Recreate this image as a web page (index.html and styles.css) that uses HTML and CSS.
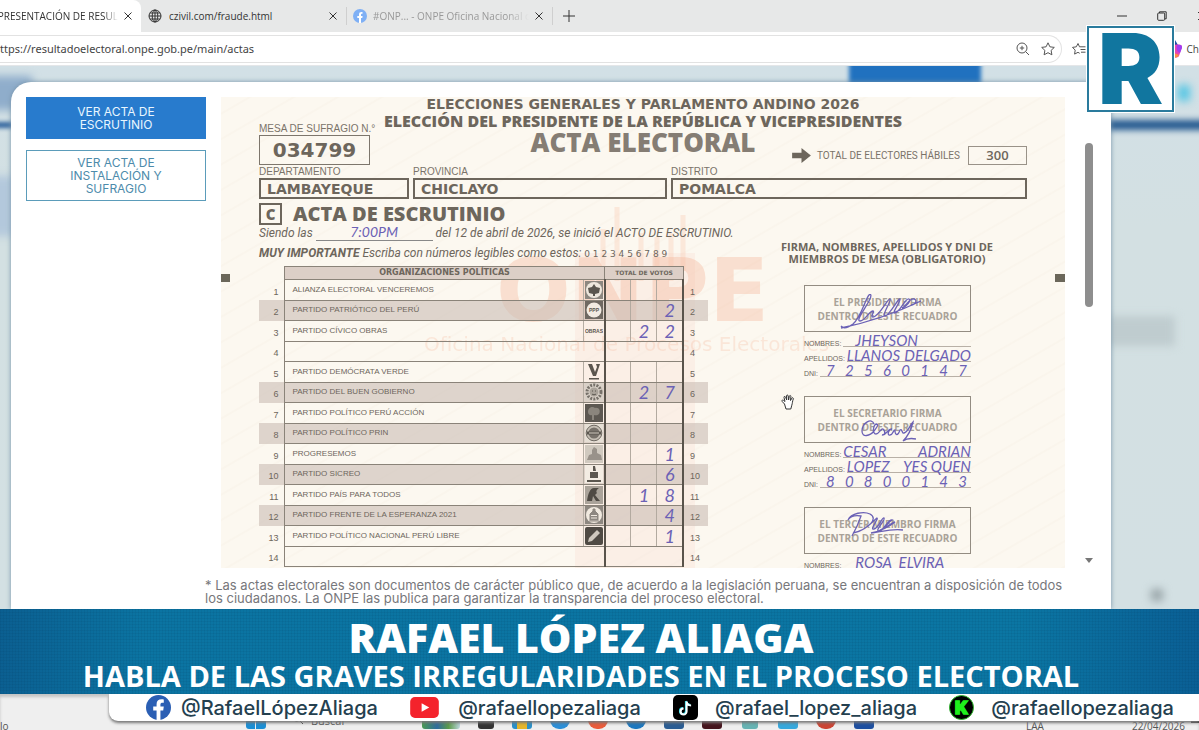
FILE: index.html
```html
<!DOCTYPE html>
<html lang="es">
<head>
<meta charset="utf-8">
<meta name="viewport" content="width=device-width, initial-scale=1">
<title>Presentación de resultados</title>
<link rel="stylesheet" href="styles.css">
</head>
<body>
<header class="browser">
  <div class="tabs">
    <div class="tab tab-active"><span class="tab-title">PRESENTACIÓN DE RESUL</span><button class="close" aria-label="Cerrar pestaña"><svg viewBox="0 0 8 8"><path d="M.5.5l7 7M7.500.5l-7 7"/></svg></button></div>
    <div class="tab tab-site"><svg class="globe" viewBox="0 0 14 14"><circle cx="7" cy="7" r="6"/><ellipse cx="7" cy="7" rx="2.800" ry="6"/><path d="M1 7h12M2 4h10M2 10h10M7 1v12"/></svg><span class="tab-title">czivil.com/fraude.html</span><button class="close" aria-label="Cerrar pestaña"><svg viewBox="0 0 8 8"><path d="M.5.5l7 7M7.500.5l-7 7"/></svg></button></div>
    <div class="tab tab-fb"><svg class="fb-small" viewBox="0 0 14 14"><circle cx="7" cy="7" r="7" fill="#7fb0f5"/><path d="M6 14V9H4.300V7H6V5.500C6 3.600 7 2.800 9.500 3v1.800C8.300 4.700 8 5 8 5.800V7h1.600l-.3 2H8v5z" fill="#fff"/></svg><span class="tab-title">#ONP... - ONPE Oficina Nacional d</span><button class="close" aria-label="Cerrar pestaña"><svg viewBox="0 0 8 8"><path d="M.5.5l7 7M7.500.5l-7 7"/></svg></button></div>
    <button class="new-tab" aria-label="Nueva pestaña"><svg viewBox="0 0 14 14"><path d="M7 1v12M1 7h12"/></svg></button>
    <div class="window-buttons">
      <button aria-label="Minimizar"><svg viewBox="0 0 10 10"><path d="M0 5h10"/></svg></button>
      <button aria-label="Restaurar"><svg viewBox="0 0 10 10"><rect x=".7" y="2" width="7" height="7.300" rx="1"/><path d="M2.500 2V.8h6.700v7H8"/></svg></button>
      <button aria-label="Cerrar"><svg viewBox="0 0 10 10"><path d="M1 1l8 8M9 1l-8 8"/></svg></button>
    </div>
  </div>
  <div class="toolbar">
    <div class="address">
      <input class="url" type="text" aria-label="Dirección" value="ttps://resultadoelectoral.onpe.gob.pe/main/actas">
      <svg class="tool" viewBox="0 0 14 14"><circle cx="6" cy="6" r="5"/><path d="M9.700 9.700L13 13M6 3.800v4.400M3.800 6h4.400"/></svg>
      <svg class="tool" viewBox="0 0 14 14"><path d="M7 .8l1.900 4 4.400.6-3.200 3 .8 4.400L7 10.700l-3.900 2.100.8-4.400-3.200-3 4.400-.6z"/></svg>
    </div>
    <svg class="tool" viewBox="0 0 14 14"><path d="M7.500 4.800H13.500M8.500 7.500h5M9 10.200h4.500M7.500 4.800L6 1.500 4.300 4.800l-3.800.6 2.700 2.700-.6 4L6 10.300l1.700 1"/></svg>
    <div class="copilot"><svg viewBox="0 0 12 18"><path d="M0 0h5l3 5-3 3H0z" fill="#1c4fa3"/><path d="M2 6c5-2 10-2 10 1l-3 9c-1 2-5 2-7 1z" fill="#e643b4"/><path d="M7 5c4-1 5 0 5 3l-2 5c-3-1-4-4-3-8z" fill="#a03df0"/><path d="M2 12l7 3c-1 3-5 3-7 2z" fill="#ff8a45"/></svg><span>Ch</span></div>
  </div>
</header>

<main class="stage">
  <div class="blur-shape nav-button"></div>
  <div class="blur-shape left-top"></div>
  <div class="blur-shape left-line"></div>
  <div class="blur-shape left-soft"></div>
  <div class="blur-shape right-line"></div>
  <div class="blur-shape right-cyan"></div>
  <div class="blur-shape right-box"></div>
  <div class="blur-shape right-dot"></div>

  <section class="dialog">
    <div class="dialog-body">
      <nav class="choices">
        <button class="choice choice-on">VER ACTA DE<br>ESCRUTINIO</button>
        <button class="choice">VER ACTA DE<br>INSTALACIÓN Y<br>SUFRAGIO</button>
      </nav>

      <article class="acta">
        <div class="watermark">
          <svg class="wm-hand" viewBox="0 0 120 400"><path d="M0 80h120v320H0z" opacity=".3"/><path d="M28 104V56M42 108V34M66 108V60M82 108V64M96 108V60M108 98V42" fill="none" stroke="#f9cfb9" stroke-width="5" opacity=".4"/></svg>
          <span class="wm-name">ONPE</span>
          <span class="wm-sub">Oficina Nacional de Procesos Electorales</span>
        </div>
        <i class="mark mark-left"></i><i class="mark mark-right"></i>

        <div class="acta-head">
          <div class="mesa"><span class="label">MESA DE SUFRAGIO N.°</span><strong class="mesa-num">034799</strong></div>
          <div class="titles">
            <p class="t1">ELECCIONES GENERALES Y PARLAMENTO ANDINO 2026</p>
            <p class="t2">ELECCIÓN DEL PRESIDENTE DE LA REPÚBLICA Y VICEPRESIDENTES</p>
            <p class="t3">ACTA ELECTORAL</p>
          </div>
          <div class="electors"><svg viewBox="0 0 20 16"><path d="M0 5h10V0l10 8-10 8v-5H0z"/></svg><span class="label">TOTAL DE ELECTORES HÁBILES</span><strong>300</strong></div>
        </div>

        <div class="places">
          <div><span class="label">DEPARTAMENTO</span><strong>LAMBAYEQUE</strong></div>
          <div><span class="label">PROVINCIA</span><strong>CHICLAYO</strong></div>
          <div><span class="label">DISTRITO</span><strong>POMALCA</strong></div>
        </div>

        <div class="acta-main">
          <div class="scrutiny">
            <h2><span class="letter">C</span>ACTA DE ESCRUTINIO</h2>
            <p class="start">Siendo las <span class="time ink">7:00PM</span> del 12 de abril de 2026, se inició el ACTO DE ESCRUTINIO.</p>
            <p class="note"><b>MUY IMPORTANTE</b> Escriba con números legibles como estos: <span class="samples">0 1 2 3 4 5 6 7 8 9</span></p>
            <table class="votes">
              <colgroup><col class="c-num"><col><col class="c-sym"><col class="c-v"><col class="c-v"><col class="c-v"><col class="c-num"></colgroup>
              <thead><tr><td class="out"></td><th class="head" colspan="2">ORGANIZACIONES POLÍTICAS</th><th class="head total" colspan="3">TOTAL DE VOTOS</th><td class="out"></td></tr></thead>
              <tbody>
                <tr><td class="n">1</td><td class="p">ALIANZA ELECTORAL VENCEREMOS</td><td class="s"><svg viewBox="0 0 18 18"><rect width="18" height="18" fill="#8d8780"/><circle cx="9" cy="9" r="8" fill="#eee7dd"/><path d="M9 3l2 3 4 1-1 5-4 1v2H8v-2l-4-1-1-5 4-1z" fill="#5b564f"/></svg></td><td class="v"></td><td class="v"></td><td class="v"></td><td class="n r">1</td></tr>
                <tr class="dim"><td class="n">2</td><td class="p">PARTIDO PATRIÓTICO DEL PERÚ</td><td class="s"><svg viewBox="0 0 18 18"><rect width="18" height="18" fill="#6f6962"/><circle cx="9" cy="9" r="7.500" fill="#f2ebe2"/><text x="9" y="11" text-anchor="middle" font-size="5" font-weight="700" fill="#5b564f">PPP</text></svg></td><td class="v"></td><td class="v"></td><td class="v ink">2</td><td class="n r">2</td></tr>
                <tr><td class="n">3</td><td class="p">PARTIDO CÍVICO OBRAS</td><td class="s"><svg viewBox="0 0 18 18"><text x="9" y="11" text-anchor="middle" font-size="5" font-weight="700" fill="#5b564f">OBRAS</text></svg></td><td class="v"></td><td class="v ink">2</td><td class="v ink">2</td><td class="n r">3</td></tr>
                <tr><td class="n">4</td><td class="p blank" colspan="2"></td><td class="v open" colspan="3"></td><td class="n r">4</td></tr>
                <tr><td class="n">5</td><td class="p">PARTIDO DEMÓCRATA VERDE</td><td class="s"><svg viewBox="0 0 18 18"><path d="M3 1h4l3 8 2-5-1-3h4l-4 12H8zM4 15h10v1.500H4z" fill="#5b564f"/></svg></td><td class="v"></td><td class="v"></td><td class="v"></td><td class="n r">5</td></tr>
                <tr class="dim"><td class="n">6</td><td class="p">PARTIDO DEL BUEN GOBIERNO</td><td class="s"><svg viewBox="0 0 18 18"><rect width="18" height="18" fill="#d8d0c7"/><circle cx="9" cy="9" r="7" fill="none" stroke="#77716a" stroke-width="3" stroke-dasharray="2 1.200"/><circle cx="9" cy="9" r="4.500" fill="#aaa39a"/><path d="M7 8h1M10 8h1M7 11c1 1 3 1 4 0" stroke="#5b564f" fill="none"/></svg></td><td class="v"></td><td class="v ink">2</td><td class="v ink">7</td><td class="n r">6</td></tr>
                <tr><td class="n">7</td><td class="p">PARTIDO POLÍTICO PERÚ ACCIÓN</td><td class="s"><svg viewBox="0 0 18 18"><rect width="18" height="18" fill="#5d5852"/><path d="M3 8c0-5 5-6 7-4 4-1 6 3 4 6-2 2-4 1-5 1v5H7v-5c-2 1-4-1-4-3z" fill="#8b857d"/></svg></td><td class="v"></td><td class="v"></td><td class="v"></td><td class="n r">7</td></tr>
                <tr class="dim"><td class="n">8</td><td class="p">PARTIDO POLÍTICO PRIN</td><td class="s"><svg viewBox="0 0 18 18"><rect width="18" height="18" fill="#e6dfd5"/><circle cx="9" cy="9" r="7.800" fill="#c6bfb5" stroke="#6f6962"/><circle cx="9" cy="9" r="5.500" fill="#77716a"/><path d="M2 7.500h14v3H2z" fill="#5b564f"/><path d="M4 9h10" stroke="#d8d0c7"/></svg></td><td class="v"></td><td class="v"></td><td class="v"></td><td class="n r">8</td></tr>
                <tr><td class="n">9</td><td class="p">PROGRESEMOS</td><td class="s"><svg viewBox="0 0 18 18"><rect width="18" height="18" fill="#d0c9bf"/><path d="M2 15l2-5 3-1V5l2-3 3 2v4l4 2 1 5z" fill="#99928a"/></svg></td><td class="v"></td><td class="v"></td><td class="v ink">1</td><td class="n r">9</td></tr>
                <tr class="dim"><td class="n">10</td><td class="p">PARTIDO SICREO</td><td class="s"><svg viewBox="0 0 18 18"><rect width="18" height="18" fill="#f3ece3"/><path d="M8 1h2l1 5H8zM5 7h8v6H5zM2 15h14v2H2z" fill="#5b564f"/></svg></td><td class="v"></td><td class="v"></td><td class="v ink">6</td><td class="n r">10</td></tr>
                <tr><td class="n">11</td><td class="p">PARTIDO PAÍS PARA TODOS</td><td class="s"><svg viewBox="0 0 18 18"><rect width="18" height="18" fill="#aaa39a"/><path d="M2 15C3 8 5 2 9 2h5c-3 2-3 4-2 5l-2 2 5 6h-4L8 10l-1 5z" fill="#4f4a44"/></svg></td><td class="v"></td><td class="v ink">1</td><td class="v ink">8</td><td class="n r">11</td></tr>
                <tr class="dim"><td class="n">12</td><td class="p">PARTIDO FRENTE DE LA ESPERANZA 2021</td><td class="s"><svg viewBox="0 0 18 18"><rect width="18" height="18" fill="#8d8780"/><circle cx="9" cy="9" r="8" fill="#f0e9df"/><path d="M8 3h2v2l3 3v6H5V8l3-3zM4 15h10" fill="#8d8780" stroke="#8d8780"/><path d="M6 9.500h6M6 12h6" stroke="#f0e9df"/></svg></td><td class="v"></td><td class="v"></td><td class="v ink">4</td><td class="n r">12</td></tr>
                <tr><td class="n">13</td><td class="p">PARTIDO POLÍTICO NACIONAL PERÚ LIBRE</td><td class="s"><svg viewBox="0 0 18 18"><rect width="18" height="18" rx="2" fill="#4f4a44"/><path d="M3 15l1-4 8-8 3 3-8 8z" fill="#cfc8be"/></svg></td><td class="v"></td><td class="v"></td><td class="v ink">1</td><td class="n r">13</td></tr>
                <tr><td class="n">14</td><td class="p blank" colspan="2"></td><td class="v open" colspan="3"></td><td class="n r">14</td></tr>
              </tbody>
            </table>
          </div>

          <div class="signers">
            <h3>FIRMA, NOMBRES, APELLIDOS Y DNI DE<br>MIEMBROS DE MESA (OBLIGATORIO)</h3>
            <div class="signer">
              <div class="sign-box">EL PRESIDENTE FIRMA<br>DENTRO DE ESTE RECUADRO<svg class="scribble" viewBox="0 0 84 36"><path d="M1 32c3 4 8 1 12-2 8-7 12-24 16-29 2-2 3 1 0 6-6 11-13 20-9 20 5 0 9-10 13-10 2 0-3 6 0 6 6 0 15-19 17-18 2 1-9 17-5 17s14-19 15-17-9 15-5 14c6-2 10-15 14-14 3 1-3 8-7 9 5-2 7-10 12-9 4 1 1 6-3 6l10-4C60 17 35 27 1 34"/></svg></div>
              <div class="line"><span class="small">NOMBRES:</span><span class="ink write one">JHEYSON</span></div>
              <div class="line"><span class="small">APELLIDOS:</span><span class="ink write"><span>LLANOS</span><span>DELGADO</span></span></div>
              <div class="line"><span class="small">DNI:</span><span class="ink write digits"><span>7</span><span>2</span><span>5</span><span>6</span><span>0</span><span>1</span><span>4</span><span>7</span></span></div>
            </div>
            <div class="signer">
              <div class="sign-box">EL SECRETARIO FIRMA<br>DENTRO DE ESTE RECUADRO<svg class="scribble low" viewBox="0 0 56 24"><path d="M14 5C12-2 2 4 2 12c0 7 8 5 12 0 2-3 5-6 3-7-4 0-5 10-1 10 3 0 5-6 7-5 2 2 3 6-1 6 4 1 6-7 10-6-4 0-5 7-2 6 3 0 3-5 5-5 0 6 3 6 5 0 2-2 2 4 4 3 4-1 6-8 9-11-2 9-6 15-10 19 4-3 8-3 13-2"/></svg></div>
              <div class="line"><span class="small">NOMBRES:</span><span class="ink write"><span>CESAR</span><span>ADRIAN</span></span></div>
              <div class="line"><span class="small">APELLIDOS:</span><span class="ink write"><span>LOPEZ</span><span>YES QUEN</span></span></div>
              <div class="line"><span class="small">DNI:</span><span class="ink write digits"><span>8</span><span>0</span><span>8</span><span>0</span><span>0</span><span>1</span><span>4</span><span>3</span></span></div>
            </div>
            <div class="signer">
              <div class="sign-box">EL TERCER MIEMBRO FIRMA<br>DENTRO DE ESTE RECUADRO<svg class="scribble third" viewBox="0 0 56 28"><path d="M5 25C9 18 13 8 14 5c-6-1-11 1-13 4C4 2 17 0 23 3c9 5-2 15-17 19 10-1 17-9 24-15 2 1-8 12-3 11s8-12 10-11c2 2-10 13-5 13s9-12 13-11c-5 3-6 8-12 10 7-2 10-7 15-8-5 4-14 9-24 11 9-1 22-5 32-3"/></svg></div>
              <div class="line"><span class="small">NOMBRES:</span><span class="ink write one"><span>ROSA &nbsp;ELVIRA</span></span></div>
            </div>
          </div>
        </div>
        <svg class="hand-cursor" viewBox="0 0 14 16"><path d="M3.500 10L1.200 7.500c-1-1 .5-2 1.500-1L4 7.500 3 3.500c-.3-1.200 1.200-1.500 1.600-.4L5.700 6 5.500 2c0-1.300 1.600-1.300 1.700 0l.4 4 .7-3.700c.3-1.200 1.700-1 1.600.3L9.500 6.500l1.300-2.300c.6-1 1.900-.3 1.500.7-1 2.600-.8 4.300-1.500 6.300L9.800 15H5z" fill="#fff" stroke="#333"/></svg>
      </article>

      <div class="scrollbar"><span class="thumb"></span><span class="arrow"></span></div>
    </div>
    <p class="footnote">* Las actas electorales son documentos de carácter público que, de acuerdo a la legislación peruana, se encuentran a disposición de todos<br>los ciudadanos. La ONPE las publica para garantizar la transparencia del proceso electoral.</p>
  </section>
</main>

<section class="banner">
  <h1>RAFAEL LÓPEZ ALIAGA</h1>
  <p>HABLA DE LAS GRAVES IRREGULARIDADES EN EL PROCESO ELECTORAL</p>
</section>

<footer class="bottom">
  <div class="taskbar">
    <span class="weather">lo</span>
    <div class="apps">
      <i class="app a-win"></i><span class="search"><svg viewBox="0 0 12 12"><circle cx="5" cy="5" r="4"/><path d="M8 8l4 4"/></svg>Buscar</span><i class="app a-pic"></i><i class="app a-dark"></i><i class="app a-files"></i><i class="app a-blue"></i><i class="app a-red"></i><i class="app a-edge"></i><i class="app a-store"></i><i class="app a-maroon"></i><i class="app a-teal"></i><i class="app a-sky"></i><i class="app a-chrome"></i><i class="app a-word"></i>
    </div>
    <div class="tray"><span>LAA</span><span>22/04/2026</span><i class="bell"></i></div>
  </div>
  <div class="social">
    <a class="s-fb" href="#"><svg viewBox="0 0 26 26"><circle cx="13" cy="13" r="13" fill="#2b5fb4"/><path d="M11 26V16H7.500v-4H11V9.500C11 5.500 13.500 4 18.500 4.700V8c-2.500-.2-3.500.2-3.500 2v2h3.500l-.6 4H15v10z" fill="#fff"/></svg>@RafaelLópezAliaga</a>
    <a class="s-yt" href="#"><svg viewBox="0 0 30 22"><rect width="30" height="22" rx="5" fill="#f4232c"/><path d="M12 6.500l8 4.500-8 4.500z" fill="#fff"/></svg>@rafaellopezaliaga</a>
    <a class="s-tt" href="#"><svg viewBox="0 0 25 25"><rect width="25" height="25" rx="5" fill="#000"/><path d="M13 6v10a3 3 0 1 1-3-3M13 6c.3 2.500 2 4 4.500 4" fill="none" stroke="#25d9e5" stroke-width="2.200"/><path d="M13.600 6.500v10a3 3 0 1 1-3-3M13.600 6.500c.3 2.500 2 4 4.500 4" fill="none" stroke="#fff" stroke-width="2"/></svg>@rafael_lopez_aliaga</a>
    <a class="s-kk" href="#"><svg viewBox="0 0 26 26"><circle cx="13" cy="13" r="12.500" fill="#000" stroke="#2fbd2c"/><text x="13" y="19.500" text-anchor="middle" font-size="18" font-weight="900" fill="#1ff01c" stroke="#1ff01c" stroke-width="1.500">K</text></svg>@rafaellopezaliaga</a>
  </div>
</footer>

<div class="logo">R</div>
</body>
</html>
```

FILE: styles.css
```css
* { box-sizing: border-box; }
html, body { height: 100%; }
body {
  margin: 0;
  display: flex;
  flex-direction: column;
  overflow: hidden;
  position: relative;
  font-family: "Open Sans", "Noto Sans", sans-serif;
  background: #fff;
}
p, h1, h2, h3 { margin: 0; }
button { border: 0; background: none; padding: 0; font: inherit; color: inherit; }
svg { display: block; flex: none; }

/* Browser chrome */
.tabs { display: flex; align-items: center; height: 32px; background: #e7e8e8; font-size: 10px; color: #333; white-space: nowrap; }
.tab { display: flex; align-items: center; height: 18px; padding-right: 9px; }
.tab-title { flex: 1; overflow: hidden; }
.tab-active { width: 141px; height: 32px; background: #fff; border-radius: 0 8px 0 0; }
.tab-active .tab-title { direction: rtl; margin-right: 6px; -webkit-mask-image: linear-gradient(90deg, #000 88%, transparent); mask-image: linear-gradient(90deg, #000 88%, transparent); }
.tab-site { width: 206px; padding-left: 7px; border-right: 1px solid #cfcfcf; gap: 7px; }
.tab-fb { width: 206px; padding-left: 6px; border-right: 1px solid #cfcfcf; gap: 6px; color: #999; }
.tab-fb .tab-title { -webkit-mask-image: linear-gradient(90deg, #000 85%, transparent); mask-image: linear-gradient(90deg, #000 85%, transparent); }
.tab svg { fill: none; stroke: #333; stroke-width: 1; }
.close svg { width: 8px; height: 8px; }
.globe, .tab .fb-small { width: 14px; height: 14px; }
.tab .fb-small { stroke: none; }
.new-tab { margin-left: 9px; }
.new-tab svg { width: 14px; height: 14px; stroke: #333; }
.window-buttons { margin-left: auto; display: flex; gap: 30px; margin-right: -8px; }
.window-buttons svg { width: 10px; height: 10px; fill: none; stroke: #333; }
.toolbar { display: flex; align-items: center; height: 34px; background: #fff; border-bottom: 1px solid #e4e6e8; }
.address { display: flex; align-items: center; gap: 11px; flex: 1; height: 28px; padding-right: 6px; border: 1px solid #e2e2e2; border-left: 0; border-radius: 0 14px 14px 0; }
.url { flex: 1; border: 0; padding: 0; font: 11px "Noto Sans", "Open Sans", sans-serif; color: #444; background: none; }
.tool { width: 14px; height: 14px; fill: none; stroke: #555; }
.toolbar > .tool { margin: 0 84px 0 10px; }
.copilot { display: flex; align-items: center; gap: 5px; font-size: 10px; color: #444; }
.copilot svg { width: 12px; height: 18px; }

/* Blurred page behind the dialog */
.stage { position: relative; flex: 1; min-height: 0; display: flex; overflow: hidden; padding: 16px 88px 0 11px; background: linear-gradient(#d2e0e6, #d3e0e2 30%, #d3e0e3); }
.blur-shape { position: absolute; filter: blur(4px); }
.nav-button { left: 849px; top: -6px; width: 132px; height: 40px; background: #2071bf; filter: blur(2px); }
.left-top { left: -10px; top: 10px; width: 42px; height: 34px; background: #8fadcb; }
.left-line { left: -10px; top: 56px; width: 32px; height: 6px; background: #2f639d; filter: blur(2px); }
.left-soft { left: -10px; top: 110px; width: 26px; height: 60px; background: #b3c8dc; }
.right-line { right: -10px; top: 54px; width: 110px; height: 10px; background: #24588f; filter: blur(3px); }
.right-cyan { right: 9px; top: 19px; width: 12px; height: 16px; background: #55c6e4; }
.right-box { right: 24px; top: 250px; width: 70px; height: 30px; background: #bfcccf; }
.right-dot { right: 36px; top: 523px; width: 12px; height: 12px; background: #98a4a8; }

.dialog { position: relative; flex: 1; display: flex; flex-direction: column; padding: 15px 18px 0 15px; background: #fff; border-radius: 20px 0 0 0; box-shadow: 0 0 5px #7793a8; }
.dialog-body { flex: 1; min-height: 0; display: grid; grid-template-columns: 180px 1fr 8px; grid-template-rows: 100%; column-gap: 15px; }
.choices { display: flex; flex-direction: column; gap: 11px; }
.choice { display: block; padding: 5px 0; border: 1px solid #5b9cba; color: #4d8bab; font-family: "Inter", sans-serif; font-size: 12px; line-height: 13px; }
.choice-on { background: #287bcd; border-color: #287bcd; color: #e8f6ff; padding: 7px 0; }
.footnote { margin-left: 179px; padding: 11px 0 4px; white-space: nowrap; font-family: "Inter", sans-serif; font-size: 13px; line-height: 13px; color: #77777b; }
.scrollbar { display: flex; flex-direction: column; justify-content: space-between; align-items: center; padding: 46px 0 5px; width: 8px; }
.thumb { width: 8px; height: 164px; border-radius: 4px; background: #8e8e8e; }
.arrow { border: 4px solid transparent; border-top: 5px solid #777; border-bottom: 0; }

/* Scanned record */
.acta { position: relative; overflow: hidden; margin-right: 5px; padding: 0 38px; color: #6d665c; background: repeating-linear-gradient(150deg, #fcf8f0 0 13px, #faf5ec 14px 15px, #fcf8f0 16px 22px); font-family: "Liberation Sans", sans-serif; }
.label { font-size: 10px; line-height: 13px; color: #7a7369; white-space: nowrap; }
.acta-head, .places, .acta-main { position: relative; }
.acta-head { display: grid; height: 68px; }
.acta-head > div { grid-area: 1 / 1; }
.mesa { justify-self: start; align-self: end; display: flex; flex-direction: column; }
.mesa-num { width: 111px; height: 30px; border: 1px solid #7d766c; text-align: center; font: 700 20px/28px "DejaVu Sans", sans-serif; }
.titles { text-align: center; white-space: nowrap; }
.t1 { font: 700 14px/15px "DejaVu Sans", sans-serif; }
.t2 { font: 800 16px/18px "Open Sans", sans-serif; }
.t3 { font: 800 26px/24px "Open Sans", sans-serif; color: #857d74; }
.electors { justify-self: end; align-self: end; display: flex; align-items: center; }
.electors .label { font-family: "Roboto", sans-serif; font-size: 10px; }
.electors svg { width: 19px; height: 15px; fill: #6d665c; margin-right: 6px; }
.electors strong { width: 59px; height: 19px; margin-left: 8px; border: 1px solid #999288; text-align: center; font: 600 13px/17px "Open Sans", sans-serif; }
.places { display: grid; grid-template-columns: 150fr 254fr 356fr; gap: 4px; }
.places > div { display: flex; flex-direction: column; }
.places strong { height: 21px; padding-left: 6px; border: 2px solid #6d665c; font: 700 14px/18px "DejaVu Sans", sans-serif; }
.acta-main { display: grid; grid-template-columns: 1fr 280px; padding-top: 4px; }
.scrutiny { min-width: 0; white-space: nowrap; }
.scrutiny h2 { display: flex; align-items: center; gap: 11px; font: 800 20px/22px "Open Sans", sans-serif; }
.letter { width: 23px; height: 22px; border: 2px solid #6d665c; text-align: center; font-size: 15px; line-height: 18px; }
.start, .note { font: italic 12px/20px "Roboto", "Liberation Sans", sans-serif; }
.start { line-height: 16px; }
.time { display: inline-block; width: 117px; height: 12px; border-bottom: 1px solid #888; text-align: center; font-size: 14px; line-height: 5px; }
.note { padding-top: 2px; }
.samples { font: 9px "DejaVu Sans", sans-serif; }
.ink { color: #6b61b5; font-family: "Lato", sans-serif; font-style: italic; }

.votes { margin-top: 3px; width: 449px; height: 301px; table-layout: fixed; border-collapse: collapse; }
.votes td, .votes th { padding: 0; line-height: 10px; }
.votes tbody tr { height: 20px; }
.c-num { width: 25px; }
.c-sym { width: 21px; }
.c-v { width: 26px; }
.votes .head { height: 13px; border: 1px solid #8a8379; background: #dccfc7; font: 700 8px/10px "DejaVu Sans", sans-serif; }
.votes .head.total { font-size: 6px; }
.votes .n { font-size: 9px; text-align: right; padding: 4px 5px 0 0; }
.votes .n.r { text-align: left; padding-left: 6px; }
.votes .p { padding: 0 0 0 8px; border: 1px solid #8a8379; border-right-color: #b5ada3; font-size: 8px; }
.votes .s { border-top: 1px solid #8a8379; border-bottom: 1px solid #8a8379; }
.votes .s svg { width: 18px; height: 18px; margin: auto; font-family: "Liberation Sans", sans-serif; }
.votes .v { border: 1px solid #b3aaa0; border-top-color: #8a8379; border-bottom-color: #8a8379; text-align: center; font-size: 18px; }
.votes .s + .v, .votes .open { border-left: 2px solid #59534b; }
.votes tbody td:nth-last-child(2) { border-right: 2px solid #59534b; }
.dim { background: #cbbdb59c; }

.signers h3 { padding: 38px 0 20px; text-align: center; white-space: nowrap; font: 700 11px/12px "Open Sans", sans-serif; }
.signer { width: 167px; margin: 0 auto 19px 57px; }
.sign-box { position: relative; height: 47px; padding-top: 9px; border: 1px solid #938c82; text-align: center; white-space: nowrap; color: #a9a298; font: 700 10px/14px "Open Sans", sans-serif; }
.scribble { position: absolute; left: 35px; top: 8px; width: 84px; height: 36px; fill: none; stroke: #6b61b5; stroke-width: 1.300; }
.scribble.low { left: 55px; top: 22px; width: 56px; height: 24px; }
.scribble.third { left: 42px; top: 3px; width: 56px; height: 28px; }
.line { display: flex; align-items: flex-end; gap: 2px; height: 15px; }
.small { font-size: 7px; line-height: 7px; }
.write { flex: 1; display: flex; justify-content: space-between; height: 13px; border-bottom: 1px solid #b8b0a6; font-size: 15px; line-height: 12px; white-space: nowrap; }
.write.one { padding-left: 12px; }
.digits { padding: 0 4px 0 6px; }

.watermark { position: absolute; inset: 0; color: #f5b598; white-space: nowrap; }
.wm-hand { position: absolute; left: 354px; top: 76px; width: 120px; height: 400px; fill: #f9dccf; }
.wm-name { position: absolute; left: 275px; top: 142px; font: 700 88px/104px "DejaVu Sans", sans-serif; opacity: .36; }
.wm-sub { position: absolute; left: 203px; top: 236px; font: 20px/22px "DejaVu Sans", sans-serif; opacity: .26; }
.mark { position: absolute; top: 177px; width: 10px; height: 8px; background: #6b675a; }
.mark-left { left: -1px; }
.mark-right { right: 0; }
.hand-cursor { position: absolute; left: 560px; top: 297px; width: 14px; height: 16px; }

/* Broadcast lower third */
.banner { position: relative; height: 85px; padding: 7px 37px 0 0; text-align: center; white-space: nowrap; color: #fff; background: repeating-linear-gradient(90deg, #00305014 0 1px, transparent 1px 3px), repeating-linear-gradient(#00305014 0 1px, transparent 1px 3px), linear-gradient(90deg, #0b5f91, #0b74a2 12%, #0b76a3 85%, #0a5f95); }
.banner h1 { font: 800 41px/42px "Open Sans", sans-serif; }
.banner p { font: 700 29px/36px "Open Sans", sans-serif; }
.bottom { position: relative; height: 36px; }
.taskbar { display: flex; height: 36px; background: #efefef; box-shadow: inset 0 3px 3px #c4c4c4; font-size: 10px; color: #555; }
.weather { width: 246px; padding-top: 25px; }
.apps { display: flex; gap: 18px; padding-top: 17px; }
.app { width: 20px; height: 18px; border-radius: 3px; }
.search { display: flex; gap: 8px; width: 120px; padding: 2px 0 0 8px; font-size: 11px; }
.search svg { width: 11px; height: 11px; fill: none; stroke: #333; }
.a-win { background: linear-gradient(90deg, #1a8ed4 9px, #efefef 9px 10px, #1a8ed4 10px); }
.a-pic { width: 38px; background: linear-gradient(90deg, #4a9a52, #2f6c9e 40%, #5c9b4b 70%, #bcd6df); }
.a-dark { width: 16px; background: #333; }
.a-files { background: linear-gradient(90deg, #2a90c8 5px, #e4b52c 5px 15px, #2a90c8 15px); }
.a-blue { background: #2b8fd8; border-radius: 9px; }
.a-red { background: #ea5b3a; border-radius: 9px; }
.a-edge { background: #1c78bf; border-radius: 9px; }
.a-store { background: #2a5d93; }
.a-maroon { background: #45141d; }
.a-teal { width: 16px; margin: 0 2px; background: #66b3b3; }
.a-sky { background: #36a8dc; }
.a-chrome { background: #cc4433; border-radius: 9px; }
.a-word { background: #1d4fa0; }
.tray { margin-left: auto; display: flex; gap: 88px; padding: 25px 0 0; }
.bell { width: 8px; height: 4px; margin-left: -82px; background: #333; }
.social { position: absolute; left: 109px; right: 0; top: 0; height: 27px; display: flex; align-items: center; justify-content: space-between; padding: 0 25px 0 37px; background: #fff; border-radius: 0 0 0 9px; box-shadow: 0 2px 3px #777; }
.social a { display: flex; align-items: center; color: #24404f; text-decoration: none; font: 500 20px/26px "Inter", sans-serif; }
.social svg { width: 25px; height: 25px; margin-right: 10px; }
.s-yt svg { width: 29px; height: 21px; margin-right: 19px; }
.s-tt svg, .s-kk svg { margin-right: 17px; }

.logo { position: absolute; right: 25px; top: 26px; width: 87px; height: 86px; border: 2px solid #2a7b9d; outline: 1px solid #fff; background: #fff; color: #11769f; text-align: center; font: 900 98px/82px "Inter", sans-serif; }
```
